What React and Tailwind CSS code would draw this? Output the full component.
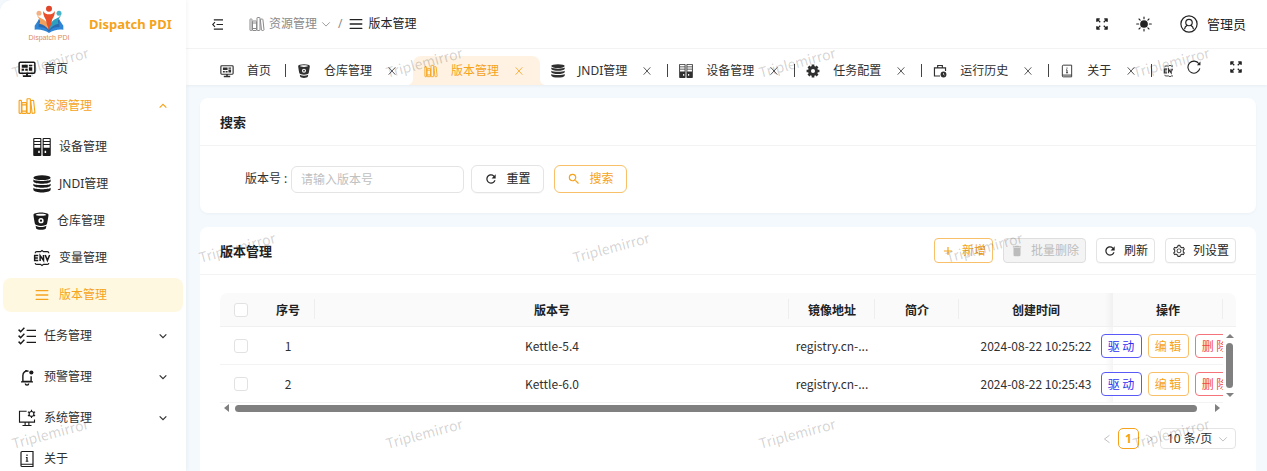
import React from "react";
import { IoLibraryOutline } from "react-icons/io5";
import { MdRefresh, MdSearch, MdAdd, MdDelete } from "react-icons/md";
import { AiOutlineSetting } from "react-icons/ai";

function Monitor({ className }) {
  return (
    <svg viewBox="0 0 24 24" className={className} fill="none" stroke="currentColor" strokeWidth="2">
      <rect x="1.5" y="3" width="21" height="14.5" rx="1.5" />
      <path d="M12 17v4M6.5 21.5h11" strokeWidth="2.6" />
      <path d="M5 6.2h8v4.2H5zM14.5 6.2H19v2h-4.500zM14.500 9.600H19v4.800h-4.500zM5 11.800h3.200v2.600H5zM9.600 11.800H13v2.600H9.600z" fill="currentColor" stroke="none" />
    </svg>
  );
}

function Servers({ className }) {
  return (
    <svg viewBox="0 0 24 24" className={className} fill="currentColor">
      <path fillRule="evenodd" d="M1.500 0h8.500a1.200 1.200 0 0 1 1.200 1.200v21.600A1.200 1.200 0 0 1 10 24H1.500A1.200 1.200 0 0 1 .3 22.800V1.200A1.200 1.200 0 0 1 1.500 0zM1.800 1.400v2.700h7.900V1.400zM1.800 5.400v2.700h7.900V5.400zM1.800 9.400v3.600h7.900V9.400zM7 17v3h2v-3z" />
      <path fillRule="evenodd" d="M14 0h8.500a1.200 1.200 0 0 1 1.200 1.200v21.600a1.200 1.200 0 0 1-1.200 1.200H14a1.200 1.200 0 0 1-1.200-1.200V1.200A1.200 1.200 0 0 1 14 0zM14.300 1.400v2.700h7.900V1.400zM14.300 5.400v2.700h7.900V5.400zM14.300 9.400v3.600h7.900V9.400zM15.500 17v3h2v-3z" />
    </svg>
  );
}

function Discs({ className }) {
  return (
    <svg viewBox="0 0 24 24" className={className} fill="currentColor">
      <ellipse cx="12" cy="3.600" rx="11.500" ry="3.200" />
      <path d="M.5 6c2.500 2.600 20.500 2.600 23 0v2.600c-1.500 4-21.500 4-23 0z" />
      <path d="M.5 11.500c2.500 2.600 20.500 2.600 23 0v2.600c-1.500 4-21.500 4-23 0z" />
      <path d="M.5 17c2.500 2.600 20.500 2.600 23 0v3c-1.500 4.400-21.500 4.400-23 0z" />
    </svg>
  );
}

function Bucket({ className }) {
  return (
    <svg viewBox="2 0 20 24" className={className} fill="currentColor">
      <path fillRule="evenodd" d="M12 .5C17.500.500 22 1.800 22 3.500c0 2-1.300 9-2 12.500-.5 1.500-4.500 2.500-8 2.500s-7.500-1-8-2.500C3.300 12.500 2 5.500 2 3.500 2 1.800 6.500.500 12 .5zM12 2.200c-4 0-7 .6-7 1.400S8 5 12 5s7-.6 7-1.400-3-1.400-7-1.400zM12 8a3.500 3.500 0 1 0 0 7 3.500 3.500 0 0 0 0-7zM12 10a1.500 1.500 0 1 1 0 3 1.500 1.500 0 0 1 0-3z" />
      <path d="M4.800 18.300c4 2.200 10.400 2.200 14.400 0l-.7 3.700c-1.500 2.400-11.500 2.400-13 0z" />
    </svg>
  );
}

function Env({ className }) {
  return (
    <svg viewBox="0 0 24 24" className={className} fill="none" stroke="currentColor" strokeWidth="1.500">
      <path d="M3 5.500V5c0-1 1-1.500 2-1.500h5L12 2l2 1.500h5c1 0 2 .5 2 1.500v.5M3 18.500v.5c0 1 1 1.500 2 1.500h5l2 1.500 2-1.500h5c1 0 2-.5 2-1.500v-.5" />
      <path d="M7 8.800H2.200v6.400H7M2.200 12h4.300M9.500 16V8.800l4.500 6.400V8M16.300 8l2.900 7.200L22.200 8" strokeWidth="2" />
    </svg>
  );
}

function Bars({ className }) {
  return (
    <svg viewBox="0 0 24 24" className={className} fill="none" stroke="currentColor" strokeWidth="2.200" strokeLinecap="round">
      <path d="M2 4.500h20M2 12h20M2 19.500h20" />
    </svg>
  );
}

function Checklist({ className }) {
  return (
    <svg viewBox="0 0 24 24" className={className} fill="none" stroke="currentColor" strokeWidth="1.900">
      <path d="M11.500 4.500H24M11.500 12.500H24M11.500 20.500H24M.800 3.500l2.700 2.700L8.500 1M.800 11.500l2.700 2.700L8.500 9M.800 19.500l2.700 2.700L8.500 17" />
    </svg>
  );
}

function Bell({ className }) {
  return (
    <svg viewBox="0 0 24 24" className={className} fill="none" stroke="currentColor" strokeWidth="1.900">
      <path d="M14 4.300C10 3.300 6.500 5.800 6.500 10v8h11v-7M4 18.500h16M10.500 2.500V4" />
      <path d="M9.800 20.500a2.200 2.200 0 0 0 4.400 0" />
      <circle cx="17.800" cy="6" r="2.800" fill="currentColor" stroke="none" />
    </svg>
  );
}

function MonitorGear({ className }) {
  return (
    <svg viewBox="0 0 24 24" className={className} fill="none" stroke="currentColor" strokeWidth="1.500">
      <path d="M11.500 3H2v14.500h20V14M9.500 17.500V22M14.500 17.500V22M6 22h12" />
      <circle cx="18" cy="6.500" r="3.200" />
      <path d="M18 1v2.300M18 9.700V12M13.200 3.800l2 1.100M20.800 8.100l2 1.100M13.200 9.200l2-1.100M20.800 4.900l2-1.100" />
    </svg>
  );
}

function InfoBook({ className }) {
  return (
    <svg viewBox="0 0 24 24" className={className} fill="none" stroke="currentColor" strokeWidth="1.600">
      <path d="M4 19V3.500C4 2.700 4.700 2 5.500 2H20v20H5.500A1.500 1.500 0 0 1 4 20.500V19h16" />
      <path d="M12 6v2M10.500 10H12v5M10.300 15h3.500" />
    </svg>
  );
}

function Gear({ className }) {
  return (
    <svg viewBox="0 0 24 24" className={className} fill="none" stroke="currentColor">
      <circle cx="12" cy="12" r="6" strokeWidth="5" />
      <path d="M12 1v4M12 19v4M1 12h4M19 12h4M4.200 4.200l3 3M16.800 16.800l3 3M4.200 19.800l3-3M16.800 7.200l3-3" strokeWidth="4.600" />
    </svg>
  );
}

function CaseClock({ className }) {
  return (
    <svg viewBox="0 0 24 24" className={className} fill="none" stroke="currentColor" strokeWidth="2">
      <path d="M12 20.500H2.500v-14h19V12M8 6V2.500h8V6" />
      <circle cx="18" cy="18" r="5" fill="currentColor" stroke="none" />
      <path d="M18 15.500V18l1.800 1" stroke="white" strokeWidth="1.200" />
    </svg>
  );
}

function Expand({ className }) {
  return (
    <svg viewBox="0 0 24 24" className={className} fill="none" stroke="currentColor" strokeWidth="2.400">
      <path d="M2 8V2h6M2 2l6.500 6.500M16 2h6v6M22 2l-6.500 6.500M2 16v6h6M2 22l6.500-6.500M22 16v6h-6M22 22l-6.500-6.500" />
      <path d="M1 1h6L1 7zM23 1h-6l6 6zM1 23h6l-6-6zM23 23h-6l6-6z" fill="currentColor" stroke="none" />
    </svg>
  );
}

function Sun({ className }) {
  return (
    <svg viewBox="0 0 24 24" className={className} fill="none" stroke="currentColor" strokeWidth="1.700" strokeLinecap="round">
      <circle cx="12" cy="12" r="5.800" fill="currentColor" stroke="none" />
      <path d="M12 1.500V4M12 20v2.500M1 12h3M20 12h3M4.500 4.500l1.700 1.700M17.800 17.800l1.700 1.700M4.500 19.500l1.700-1.700M17.800 6.200l1.700-1.700" />
    </svg>
  );
}

function Account({ className }) {
  return (
    <svg viewBox="0 0 24 24" className={className} fill="none" stroke="currentColor" strokeWidth="1.600">
      <circle cx="12" cy="12" r="10.800" />
      <circle cx="12" cy="10" r="4.300" />
      <path d="M6 19c.3-3 2-4.500 3.800-5.500M18 19c-.3-3-2-4.500-3.800-5.500" />
    </svg>
  );
}

function Fold({ className }) {
  return (
    <svg viewBox="0 0 24 24" className={className} fill="none" stroke="currentColor" strokeWidth="2.400">
      <path d="M4 2h20M10 12h14M4 22h20M6.500 7L1.500 12l5 5" />
    </svg>
  );
}

function Chevron({ className, d = "M3 8l9 9 9-9", w = 2 }) {
  return (
    <svg viewBox="0 0 24 24" className={className} fill="none" stroke="currentColor" strokeWidth={w}>
      <path d={d} />
    </svg>
  );
}

function Cross({ className }) {
  return (
    <svg viewBox="0 0 24 24" className={className} fill="none" stroke="currentColor" strokeWidth="2.400">
      <path d="M2 1l20 22M22 1L2 23" />
    </svg>
  );
}

function Reload({ className }) {
  return (
    <svg viewBox="0 0 24 24" className={className} fill="none" stroke="currentColor" strokeWidth="1.900">
      <path d="M22 14.500A10.300 10.300 0 1 1 20.500 6.500" />
      <path d="M23 2.500v6.500h-6z" fill="currentColor" stroke="none" />
    </svg>
  );
}

function Logo() {
  return (
    <svg viewBox="0 0 90 84" className="h-7 w-[30px]">
      <path d="M2 74V62l12-18 31 22 31-22 12 18v12c-16-2-31 2-43 10C33 76 18 72 2 74z" fill="#2f86d6" />
      <path d="M14 66V42c12 2 24 8 31 20 7-12 19-18 31-20v24c-14 0-24 4-31 14-7-10-17-14-31-14z" fill="#2a68b0" />
      <path d="M8 28c6 12 18 12 26 20 5 5 9 12 10 26C36 64 28 58 16 56c6-10-4-16-8-28z" fill="#f2a05c" />
      <path d="M82 28c-6 12-18 12-26 20-5 5-9 12-10 26 8-10 16-16 28-18-6-10 4-16 8-28z" fill="#2f9fc0" />
      <path d="M28 18c4 8 10 10 17 10s13-2 17-10c2 14-6 20-8 28-1 8-4 16-9 28-5-12-8-20-9-28-2-8-10-14-8-28z" fill="#e8502c" />
      <circle cx="45" cy="11" r="9" fill="#e0452a" />
      <circle cx="15" cy="25" r="7.500" fill="#f3b183" />
      <circle cx="75" cy="25" r="7.500" fill="#48b4c8" />
    </svg>
  );
}

function MenuItem({ icon: Icon, label, arrow, active, sub, selected }) {
  return (
    <li className={sub ? "px-[3px]" : ""}>
      <a
        href="#"
        className={
          "flex h-[34px] items-center rounded-lg " +
          (sub ? "gap-2 pl-[30px] " : "gap-2 pl-[18px] ") +
          (selected ? "bg-[#fff8e1] text-[#f5a31c]" : active ? "text-[#f5a31c]" : "text-[#303030]")
        }
      >
        <Icon className={selected ? "mx-0.5 size-3.5" : active ? "size-[18px]" : Icon === Bucket ? "h-[18px] w-4 text-[#1a1a1a]" : "size-[18px] text-[#1a1a1a]"} />
        <span>{label}</span>
        {arrow && <Chevron className="mr-[19px] ml-auto size-2" w={3.5} d={arrow === "up" ? "M2 17L12 7l10 10" : "M2 7l10 10L22 7"} />}
      </a>
    </li>
  );
}

const subItems = [
  { icon: Servers, label: "设备管理" },
  { icon: Discs, label: "JNDI管理" },
  { icon: Bucket, label: "仓库管理" },
  { icon: Env, label: "变量管理" },
  { icon: Bars, label: "版本管理", selected: true },
];

function Sidebar() {
  return (
    <aside className="z-10 w-[186px] shrink-0 overflow-hidden rounded-tl-xl bg-white shadow-[1px_0_4px_rgba(0,0,0,0.05)]">
      <div className="flex h-12 items-center pl-[27px]">
        <div className="flex w-11 flex-col items-center">
          <Logo />
          <span className="font-['Liberation_Sans',sans-serif] text-[7px] leading-[10px] whitespace-nowrap text-[#dd8a62]">Dispatch PDI</span>
        </div>
        <span className="ml-[18px] text-[13px] font-bold whitespace-nowrap text-[#f5a31c]">Dispatch PDI</span>
      </div>
      <nav>
        <ul className="mt-1 flex flex-col gap-[3px]">
          <MenuItem icon={Monitor} label="首页" />
          <li>
            <ul>
              <MenuItem icon={IoLibraryOutline} label="资源管理" arrow="up" active />
            </ul>
            <ul className="mt-[7px] flex flex-col gap-[3px]">
              {subItems.map((s) => (
                <MenuItem key={s.label} sub {...s} />
              ))}
            </ul>
          </li>
        </ul>
        <ul className="mt-[7px] flex flex-col gap-[7px]">
          <MenuItem icon={Checklist} label="任务管理" arrow="down" />
          <MenuItem icon={Bell} label="预警管理" arrow="down" />
          <MenuItem icon={MonitorGear} label="系统管理" arrow="down" />
          <MenuItem icon={InfoBook} label="关于" />
        </ul>
      </nav>
    </aside>
  );
}

const tabs = [
  { icon: Monitor, label: "首页", fixed: true, line: true },
  { icon: Bucket, label: "仓库管理" },
  { icon: IoLibraryOutline, label: "版本管理", active: true },
  { icon: Discs, label: "JNDI管理", line: true },
  { icon: Servers, label: "设备管理", line: true },
  { icon: Gear, label: "任务配置", line: true },
  { icon: CaseClock, label: "运行历史", line: true },
  { icon: InfoBook, label: "关于", line: true },
  { icon: Env, label: "变量管理", line: true },
];

function Tab({ icon: Icon, label, fixed, active, line }) {
  return (
    <div className={"relative flex h-[29px] shrink-0 items-center pl-[11px] " + (active ? "rounded-t-lg bg-[#fff2e2] text-[#f5a31c]" : "text-[#303030]")}>
      {active && (
        <>
          <svg viewBox="0 0 6 6" className="absolute bottom-0 -left-1.5 size-1.5 text-[#fff2e2]" fill="currentColor"><path d="M6 0v6H0c3.500 0 6-2.500 6-6z" /></svg>
          <svg viewBox="0 0 6 6" className="absolute -right-1.5 bottom-0 size-1.5 text-[#fff2e2]" fill="currentColor"><path d="M0 0v6h6C2.500 6 0 3.500 0 0z" /></svg>
        </>
      )}
      <button type="button" className="flex items-center gap-[13px] whitespace-nowrap">
        <Icon className="size-3.5 shrink-0" />
        <span>{label}</span>
      </button>
      {!fixed && (
        <button type="button" aria-label={"关闭" + label} className="ml-4">
          <Cross className="size-2" />
        </button>
      )}
      <span className={"h-[13px] w-px " + (fixed ? "ml-3.5 " : "ml-4 ") + (line ? "bg-[#444]" : "bg-transparent")} />
    </div>
  );
}

function Header() {
  return (
    <header className="bg-white shadow-[0_1px_3px_rgba(0,0,0,0.05)]">
      <div className="flex h-[49px] items-center border-b border-[#f3f3f3] pr-[21px] pl-[26px] text-[#222]">
        <button type="button" aria-label="折叠菜单">
          <Fold className="size-[11px]" />
        </button>
        <nav className="ml-[26px] flex items-center">
          <a href="#" className="flex items-center gap-1 text-[#8a8a8a]">
            <IoLibraryOutline className="size-4" />
            <span>资源管理</span>
            <Chevron className="size-2.5" />
          </a>
          <span className="mx-[7px] text-[#8a8a8a]">/</span>
          <a href="#" className="flex items-center gap-[5px]">
            <Bars className="size-3.5" />
            <span>版本管理</span>
          </a>
        </nav>
        <div className="ml-auto flex items-center">
          <button type="button" aria-label="全屏">
            <Expand className="size-3" />
          </button>
          <button type="button" aria-label="主题" className="ml-7">
            <Sun className="size-4" />
          </button>
          <button type="button" className="ml-7 flex items-center gap-[9px] text-[13px]">
            <Account className="size-[18px]" />
            管理员
          </button>
        </div>
      </div>
      <div className="flex h-9 items-end pr-[25px]">
        <div className="flex min-w-0 flex-1 overflow-hidden pl-[23px]">
          {tabs.map((t) => (
            <Tab key={t.label} {...t} />
          ))}
        </div>
        <div className="flex h-full items-center gap-[29px] pl-3.5 text-[#222]">
          <button type="button" aria-label="重新加载">
            <Reload className="size-3.5" />
          </button>
          <button type="button" aria-label="展开">
            <Expand className="size-3" />
          </button>
        </div>
      </div>
    </header>
  );
}

const tone = {
  plain: "border-[#e4e4e4] bg-white text-[#262626] shadow-[0_1px_1px_rgba(0,0,0,0.03)]",
  accent: "border-[#f8c069] bg-white text-[#f5a31c]",
  disabled: "border-[#dedede] bg-[#f4f4f4] text-[#bcbcbc]",
  blue: "border-[#5a5af8] bg-white text-[#2f2ff0]",
  red: "border-[#f5737a] bg-white text-[#f0474f]",
};

function ToolButton({ icon: Icon, label, kind = "plain" }) {
  return (
    <button type="button" disabled={kind === "disabled"} className={"flex h-[25px] items-center gap-[7px] rounded border px-1.5 whitespace-nowrap " + tone[kind]}>
      <Icon className="size-3.5" />
      {label}
    </button>
  );
}

function RowButton({ label, kind }) {
  return (
    <button type="button" className={"h-6 w-[41px] shrink-0 rounded border whitespace-pre " + tone[kind]}>
      {label}
    </button>
  );
}

function SearchCard() {
  return (
    <section className="rounded-lg bg-white shadow-[0_1px_3px_rgba(0,0,0,0.04)]">
      <h2 className="flex h-12 items-center border-b border-[#f3f3f3] px-5 text-[13px] font-bold text-[#222]">搜索</h2>
      <form className="flex items-center pt-[19px] pr-5 pb-5 pl-[45px]" onSubmit={(e) => e.preventDefault()}>
        <label htmlFor="version" className="w-[46px] whitespace-nowrap text-[#303030]">
          版本号 :
        </label>
        <input
          id="version"
          placeholder="请输入版本号"
          className="h-[27px] w-[173px] rounded-md border border-[#e4e4e4] px-[9px] outline-none placeholder:text-[#c0c0c0]"
        />
        <button type="button" className={"ml-[7px] flex h-7 w-[73px] items-center justify-center gap-2 rounded-md border " + tone.plain}>
          <MdRefresh className="size-3.5" />
          重置
        </button>
        <button type="submit" className={"ml-2.5 flex h-7 w-[73px] items-center justify-center gap-2 rounded-md border " + tone.accent}>
          <MdSearch className="size-3.5" />
          搜索
        </button>
      </form>
    </section>
  );
}

const rows = [
  { id: 1, version: "Kettle-5.4", image: "registry.cn-...", time: "2024-08-22 10:25:22" },
  { id: 2, version: "Kettle-6.0", image: "registry.cn-...", time: "2024-08-22 10:25:43" },
];

function Tick({ label }) {
  return <input type="checkbox" aria-label={label} className="block size-3.5 appearance-none rounded-[3px] border border-[#e2e2e2] bg-white" />;
}

function HeadCell({ children, line = true, className = "" }) {
  return (
    <th className={"relative border-b border-[#f0f0f0] bg-[#fafafa] p-0 text-center font-bold " + className}>
      {children}
      {line && <span className="absolute top-1.5 right-0 h-5 w-px bg-[#eeeeee]" />}
    </th>
  );
}

const cell = "border-b border-[#f3f3f3] p-0 text-center whitespace-nowrap";
const fixedShadow = "before:absolute before:inset-y-0 before:-left-2 before:w-2 before:bg-linear-to-r before:from-transparent before:to-black/4 before:content-['']";

function VersionTable() {
  return (
    <div>
      <table className="w-full table-fixed border-separate border-spacing-0 font-['Noto_Sans_CJK_SC',sans-serif] text-[#303030]">
        <colgroup>
          <col className="w-[41px]" />
          <col className="w-[54px]" />
          <col />
          <col className="w-[86px]" />
          <col className="w-[84px]" />
          <col className="w-[154px]" />
          <col className="w-[110px]" />
          <col className="w-[13px]" />
        </colgroup>
        <thead>
          <tr className="h-[34px] text-[#222]">
            <HeadCell line={false} className="rounded-tl-lg pl-3.5">
              <Tick label="全选" />
            </HeadCell>
            <HeadCell>序号</HeadCell>
            <HeadCell>版本号</HeadCell>
            <HeadCell>镜像地址</HeadCell>
            <HeadCell>简介</HeadCell>
            <HeadCell line={false}>创建时间</HeadCell>
            <HeadCell className={fixedShadow}>操作</HeadCell>
            <HeadCell line={false} className="rounded-tr-lg" />
          </tr>
        </thead>
        <tbody>
          {rows.map((r, i) => (
            <tr key={r.id} className="h-[38px]">
              <td className={cell + " pl-3.5"}>
                <Tick label={"选择 " + r.id} />
              </td>
              <td className={cell}>{r.id}</td>
              <td className={cell}>{r.version}</td>
              <td className={cell}>{r.image}</td>
              <td className={cell} />
              <td className={cell}>{r.time}</td>
              <td className={cell + " relative bg-white " + fixedShadow}>
                <div className="relative flex justify-center gap-1.5">
                  <RowButton label="驱 动" kind="blue" />
                  <RowButton label="编 辑" kind="accent" />
                  <RowButton label="删 除" kind="red" />
                </div>
              </td>
              {i === 0 && (
                <td rowSpan={rows.length} className="relative z-10 bg-white p-0">
                  <div className="flex flex-col items-center gap-[5px] text-[#808080]">
                    <svg viewBox="0 0 8 4" className="h-1 w-2" fill="currentColor"><path d="M0 4l4-4 4 4z" /></svg>
                    <div className="h-[45px] w-[7px] rounded-full bg-[#808080]" />
                    <svg viewBox="0 0 8 4" className="h-1 w-2" fill="currentColor"><path d="M0 0l4 4 4-4z" /></svg>
                  </div>
                </td>
              )}
            </tr>
          ))}
        </tbody>
      </table>
      <div className="flex h-2.5 items-center pr-4 pl-1 text-[#808080]">
        <svg viewBox="0 0 5 8" className="h-2 w-[5px]" fill="currentColor"><path d="M5 0v8L0 4z" /></svg>
        <div className="mr-[18px] ml-1.5 h-[7px] flex-1 rounded-full bg-[#808080]" />
        <svg viewBox="0 0 5 8" className="h-2 w-[5px]" fill="currentColor"><path d="M0 0v8l5-4z" /></svg>
      </div>
    </div>
  );
}

function Pagination() {
  return (
    <div className="mt-[15px] flex items-center justify-end text-[#303030]">
      <button type="button" aria-label="上一页" className="text-[#b5b5b5]">
        <Chevron className="size-2.5" d="M18 3L6 12l12 9" />
      </button>
      <button type="button" className="ml-1.5 h-[21px] w-[21px] rounded-[5px] border border-[#f5a31c] font-bold text-[#f5a31c]">1</button>
      <button type="button" aria-label="下一页" className="ml-1.5 text-[#b5b5b5]">
        <Chevron className="size-2.5" d="M6 3l12 9-12 9" />
      </button>
      <div className="relative ml-[5px]">
        <select aria-label="每页条数" className="block h-[21px] w-[76px] appearance-none rounded border border-[#e4e4e4] bg-white pl-1.5 outline-none">
          <option>10 条/页</option>
        </select>
        <Chevron className="pointer-events-none absolute top-1.5 right-2 size-2.5 text-[#b5b5b5]" />
      </div>
    </div>
  );
}

function ListCard() {
  return (
    <section className="flex-1 rounded-t-lg bg-white">
      <div className="flex h-12 items-center justify-between border-b border-[#f3f3f3] px-5">
        <h2 className="text-[13px] font-bold text-[#222]">版本管理</h2>
        <div className="flex gap-2.5">
          <ToolButton icon={MdAdd} label="新增" kind="accent" />
          <ToolButton icon={MdDelete} label="批量删除" kind="disabled" />
          <ToolButton icon={MdRefresh} label="刷新" />
          <ToolButton icon={AiOutlineSetting} label="列设置" />
        </div>
      </div>
      <div className="px-5 pt-[18px]">
        <VersionTable />
        <Pagination />
      </div>
    </section>
  );
}

const marks = [
  "left-2.5 top-[52px]",
  "left-96 top-[52px]",
  "left-[757px] top-[52px]",
  "left-[1131px] top-[52px]",
  "left-[197px] top-[237px]",
  "left-[571px] top-[237px]",
  "left-[944px] top-[237px]",
  "left-2.5 top-[423px]",
  "left-96 top-[423px]",
  "left-[757px] top-[423px]",
  "left-[1131px] top-[423px]",
];

function Watermark() {
  return (
    <div aria-hidden="true" className="pointer-events-none absolute inset-0 z-20 overflow-hidden font-['Noto_Sans_CJK_SC',sans-serif] text-[14px] leading-5 text-black/18">
      {marks.map((m) => (
        <span key={m} className={"absolute w-20 -rotate-[15deg] text-center " + m}>
          Triplemirror
        </span>
      ))}
    </div>
  );
}

export default function App() {
  return (
    <div className="relative flex h-screen overflow-hidden bg-[#f4f9fd] font-['Noto_Sans','Noto_Sans_CJK_SC',sans-serif] text-[12px] leading-[18px]">
      <Sidebar />
      <div className="flex min-w-0 flex-1 flex-col">
        <Header />
        <main className="flex flex-1 flex-col gap-3.5 pt-[13px] pr-[11px] pl-3.5">
          <SearchCard />
          <ListCard />
        </main>
      </div>
      <Watermark />
    </div>
  );
}
